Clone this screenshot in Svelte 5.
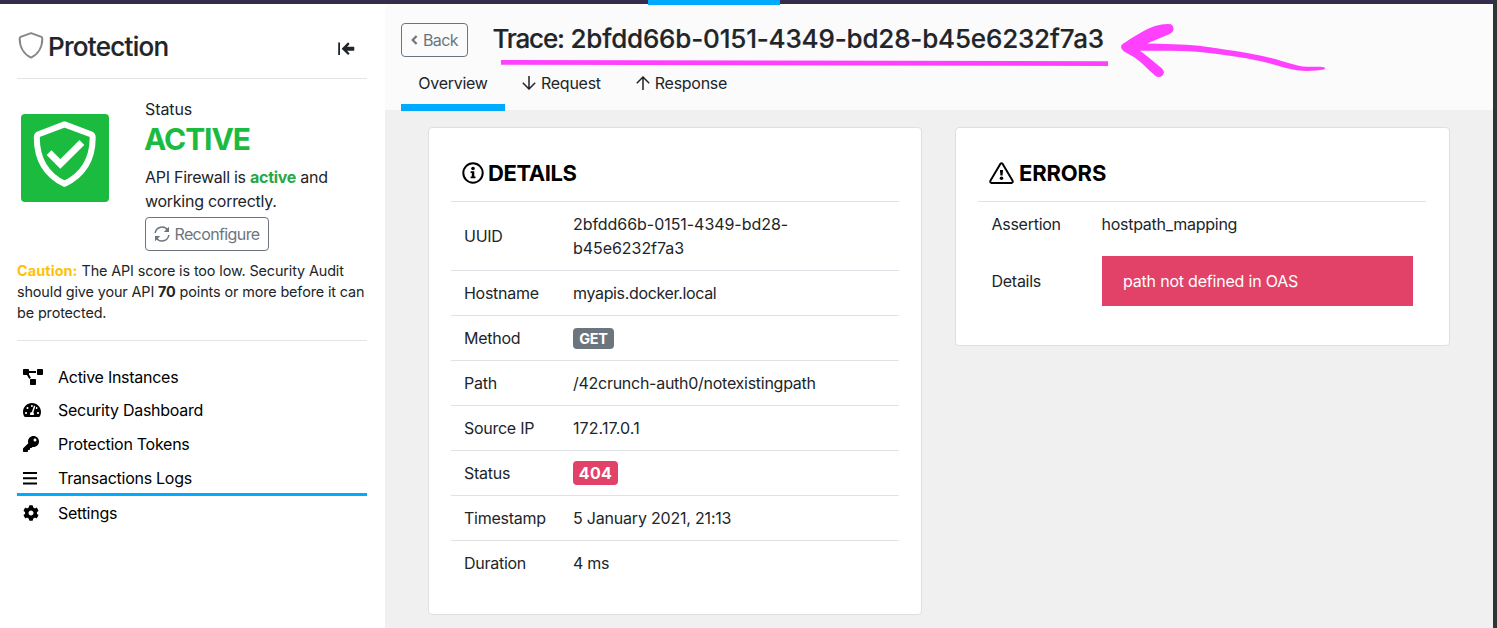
<script>
  const shield = 'M12 1.1 L22 4.7 Q22.9 5.1 22.9 6.2 C22.9 14.5 18.8 21.5 12 24.6 C5.2 21.5 1.1 14.5 1.1 6.2 Q1.1 5.1 2 4.7 Z';
  const menu = [
    { label: 'Active Instances', w: 20, box: '0 0 640 512', d: 'M384 320H256c-17.67 0-32 14.33-32 32v128c0 17.67 14.33 32 32 32h128c17.67 0 32-14.33 32-32V352c0-17.67-14.33-32-32-32zM192 32c0-17.67-14.33-32-32-32H32C14.33 0 0 14.33 0 32v128c0 17.67 14.33 32 32 32h95.72l73.16 128.04C211.98 300.98 232.4 288 256 288h.28L192 175.51V128h224V64H192V32zM608 0H480c-17.67 0-32 14.33-32 32v128c0 17.67 14.33 32 32 32h128c17.67 0 32-14.33 32-32V32c0-17.67-14.33-32-32-32z' },
    { label: 'Security Dashboard', w: 18, box: '0 0 576 512', d: 'M288 32C128.94 32 0 160.94 0 320c0 52.8 14.25 102.26 39.06 144.8 5.61 9.62 16.3 15.2 27.44 15.2h443c11.14 0 21.83-5.58 27.44-15.2C561.75 422.26 576 372.8 576 320c0-159.06-128.94-288-288-288zm0 64c14.71 0 26.58 10.13 30.32 23.65-1.11 2.26-2.64 4.23-3.45 6.67l-9.22 27.67c-5.13 3.49-10.97 6.01-17.64 6.01-17.67 0-32-14.33-32-32S270.33 96 288 96zM96 384c-17.67 0-32-14.33-32-32s14.33-32 32-32 32 14.33 32 32-14.33 32-32 32zm48-160c-17.67 0-32-14.33-32-32s14.33-32 32-32 32 14.33 32 32-14.33 32-32 32zm246.77-72.41l-61.33 184C343.13 347.33 352 364.54 352 384c0 11.72-3.38 22.55-8.88 32H232.88c-5.5-9.45-8.88-20.28-8.88-32 0-33.94 26.5-61.43 59.9-63.59l61.34-184.01c4.17-12.56 17.73-19.45 30.36-15.17 12.57 4.19 19.35 17.79 15.17 30.36zm14.66 57.2l15.52-46.55c3.47-1.29 7.13-2.23 11.05-2.23 17.67 0 32 14.33 32 32s-14.33 32-32 32c-11.38-.01-20.89-6.28-26.57-15.22zM480 384c-17.67 0-32-14.33-32-32s14.33-32 32-32 32 14.33 32 32-14.33 32-32 32z' },
    { label: 'Protection Tokens', w: 16, box: '0 0 512 512', d: 'M512 176.001C512 273.203 433.202 352 336 352c-11.22 0-22.19-1.062-32.827-3.069l-24.012 27.014A23.999 23.999 0 0 1 261.223 384H224v40c0 13.255-10.745 24-24 24h-40v40c0 13.255-10.745 24-24 24H24c-13.255 0-24-10.745-24-24v-78.059c0-6.365 2.529-12.47 7.029-16.971l161.802-161.802C163.108 213.814 160 195.271 160 176 160 78.798 238.797.001 335.999 0 433.488-.001 512 78.511 512 176.001zM336 128c0 26.51 21.49 48 48 48s48-21.49 48-48-21.49-48-48-48-48 21.49-48 48z' },
    { label: 'Transactions Logs', w: 14, box: '0 0 14 16', active: true, d: 'M0 2h14v2H0zM0 7.2h14v2H0zM0 12.4h14v2H0z' },
    { label: 'Settings', w: 16, box: '0 0 512 512', d: 'M487.4 315.7l-42.6-24.6c4.3-23.2 4.3-47 0-70.2l42.6-24.6c4.9-2.8 7.1-8.6 5.5-14-11.1-35.6-30-67.8-54.7-94.6-3.8-4.1-10-5.1-14.8-2.3L380.8 110c-17.9-15.4-38.5-27.3-60.8-35.1V25.8c0-5.6-3.9-10.5-9.4-11.7-36.7-8.2-74.3-7.8-109.2 0-5.5 1.2-9.4 6.1-9.4 11.7V75c-22.2 7.9-42.8 19.8-60.8 35.1L88.7 85.5c-4.9-2.8-11-1.9-14.8 2.3-24.7 26.7-43.6 58.9-54.7 94.6-1.7 5.4.6 11.2 5.5 14L67.3 221c-4.3 23.2-4.3 47 0 70.2l-42.6 24.6c-4.9 2.8-7.1 8.6-5.5 14 11.1 35.6 30 67.8 54.7 94.6 3.8 4.1 10 5.1 14.8 2.3l42.6-24.6c17.9 15.4 38.5 27.3 60.8 35.1v49.2c0 5.6 3.9 10.5 9.4 11.7 36.7 8.2 74.3 7.8 109.2 0 5.5-1.2 9.4-6.1 9.4-11.7v-49.2c22.2-7.9 42.8-19.8 60.8-35.1l42.6 24.6c4.9 2.8 11 1.9 14.8-2.3 24.7-26.7 43.6-58.9 54.7-94.6 1.5-5.5-.7-11.3-5.6-14.1zM256 336c-44.1 0-80-35.9-80-80s35.9-80 80-80 80 35.9 80 80-35.9 80-80 80z' }
  ];
  const details = [
    { k: 'UUID', v: '2bfdd66b-0151-4349-bd28-b45e6232f7a3', cls: 'uuid' },
    { k: 'Hostname', v: 'myapis.docker.local', cls: 'host' },
    { k: 'Method', v: 'GET', badge: 'get' },
    { k: 'Path', v: '/42crunch-auth0/notexistingpath' },
    { k: 'Source IP', v: '172.17.0.1', cls: 'ip' },
    { k: 'Status', v: '404', badge: 'code' },
    { k: 'Timestamp', v: '5 January 2021, 21:13', cls: 'time' },
    { k: 'Duration', v: '4 ms' }
  ];
</script>

<div class="frame">
  <div class="screen">
    <div class="topbar"><span class="marker"></span></div>
    <div class="body">
      <aside>
        <header class="brand">
          <svg class="brand-icon" width="26" height="27" viewBox="-0.5 0 25 26"><path d={shield} fill="none" stroke="#868686" stroke-width="1.9" stroke-linejoin="round" /></svg>
          <h2>Protection</h2>
          <svg class="collapse" width="17" height="14" viewBox="0 0 17 14"><path d="M1.1.5v12.6" stroke="#212529" stroke-width="1.8" /><path d="M4.1 6.3 9.6.8q.6-.5 1.1 0l.5.6q.5.6 0 1.1L9.1 4.700h6.500q.7 0 .7.7v2.700q0 .7-.7.7H9.100l2.100 2.100q.5.600 0 1.100l-.5.600q-.5.500-1.100 0L4.100 7.300q-.6-.5 0-1z" fill="#212529" /></svg>
        </header>
        <section class="state">
          <div class="tile">
            <svg width="88" height="88" viewBox="0 0 88 88" fill="none" stroke="#fff"><path d="M43.5 10.4 69.8 20.2Q71.7 21 71.7 23.4C71.7 45 61.5 61 43.5 69.8 25.5 61 15.8 45 15.8 23.4Q15.8 21 17.6 20.2Z" stroke-width="6" stroke-linejoin="round" /><path d="M28 38.7 39.3 50 60.9 28.5" stroke-width="6.8" /></svg>
          </div>
          <div class="state-text">
            <div class="lbl">Status</div>
            <div class="big">ACTIVE</div>
            <p>API Firewall is <b>active</b> and<br />working correctly.</p>
            <button class="btn reconf">
              <svg width="16" height="16" viewBox="0 0 16 16" fill="none" stroke="currentColor" stroke-width="1.5"><path d="M1.2 7A6.8 6.8 0 0 1 13.8 4.4M14.8 9A6.8 6.8 0 0 1 2.2 11.6" /><path d="M15 .8V6H9.8ZM1 15.2V10H6.2Z" fill="currentColor" stroke="none" /></svg>
              <span>Reconfigure</span>
            </button>
          </div>
        </section>
        <p class="caution"><b class="warn">Caution:</b> The API score is too low. Security Audit<br />should give your API <b>70</b> points or more before it can<br />be protected.</p>
        <nav>
          {#each menu as m}
            <a class:active={m.active}>
              <span class="ico"><svg width={m.w} height="16" viewBox={m.box}><path d={m.d} /></svg></span>
              <span>{m.label}</span>
            </a>
          {/each}
        </nav>
      </aside>

      <main>
        <div class="head">
          <div class="title">
            <button class="btn back"><svg width="7" height="10" viewBox="0 0 7 10"><path d="M5.6 1 1.7 5l3.900 4" fill="none" stroke="currentColor" stroke-width="2.200" /></svg><span>Back</span></button>
            <h1><span class="word">Trace:</span> 2bfdd66b-0151-4349-bd28-b45e6232f7a3</h1>
          </div>
          <div class="tabs">
            <span class="tab on">Overview</span>
            <span class="tab req"><svg width="14" height="14" viewBox="0 0 14 14"><path d="M7 0v13M.8 6.800 7 13l6.200-6.200" fill="none" stroke="currentColor" stroke-width="1.500" /></svg>Request</span>
            <span class="tab res"><svg width="14" height="14" viewBox="0 0 14 14"><path d="M7 14V1M.8 7.200 7 1l6.200 6.200" fill="none" stroke="currentColor" stroke-width="1.500" /></svg>Response</span>
          </div>
        </div>
        <div class="cards">
          <section class="card details">
            <h3><svg width="22" height="22" viewBox="0 0 22 22"><circle cx="11" cy="11" r="9.700" fill="none" stroke="#000" stroke-width="2" /><circle cx="11" cy="6.500" r="1.800" /><path d="M8.600 9.200h3.700v5.200h1.200v1.800H8.600v-1.800h1.200V11H8.600z" /></svg>DETAILS</h3>
            {#each details as r}
              <div class="row">
                <span>{r.k}</span>
                <span class={r.cls}>{#if r.badge}<b class="badge {r.badge}">{r.v}</b>{:else}{r.v}{/if}</span>
              </div>
            {/each}
          </section>
          <section class="card errors">
            <h3><svg width="25" height="22" viewBox="0 0 24 22" preserveAspectRatio="none"><path d="M11 1.800Q12 .4 13 1.800L22.700 18.900Q23.200 20.800 21.500 21H2.500Q.8 20.800 1.300 18.900Z" fill="none" stroke="#000" stroke-width="1.900" /><path d="M10.500 8h3l-.5 5.600h-2z" /><circle cx="12" cy="16.300" r="1.700" /></svg>ERRORS</h3>
            <div class="row"><span>Assertion</span><span>hostpath_mapping</span></div>
            <div class="row msg"><span>Details</span><span class="alert">path not defined in OAS</span></div>
          </section>
        </div>
      </main>
    </div>
  </div>
  <svg class="ink" width="1497" height="120" viewBox="0 0 1497 120">
    <path d="M501 62.300 1108 63.600" stroke="#ff40ff" stroke-width="4.800" />
    <path fill="#ff40ff" d="M1122.500 44C1132 38 1145 29 1155 26Q1164 23.400 1171 24.200Q1174.500 26.500 1173.200 30.500Q1172 33.500 1166 35.500L1147 43.400C1164 44 1182 43.700 1199 45.700C1222 49 1249 52.500 1271 58C1285 61.500 1295 65.500 1303 66.600C1311 67.200 1318 66.200 1324 67.300Q1326 68.500 1324 69.600C1316 71 1305 71.500 1297 70.300C1286 68.500 1276 64.500 1262 61.500C1241 56.600 1219 54 1197 51.700C1181 50.300 1160 50.800 1140 50.700C1148 56.500 1156 63.500 1162 68.500Q1165.500 72.500 1162.500 75.500Q1159 78.500 1155 75.500C1147 68.500 1140 60.500 1132 56L1124 51.500Q1119 47.500 1122.500 44Z" />
  </svg>
</div>

<style>
  :global(body) { margin: 0; overflow: hidden; }
  .frame { position: relative; display: flex; height: 628px; width: 1497px; background: #303435; font: 16px/24px Inter, "Liberation Sans", sans-serif; letter-spacing: -0.27px; color: #212529; overflow: hidden; }
  .screen { width: 1493px; display: flex; flex-direction: column; background: #fff; }
  .topbar { height: 4px; background: #352b4b; flex: none; display: flex; }
  .marker { width: 132px; height: 5px; margin-left: 648px; background: #00aaff; z-index: 1; }
  .body { flex: 1; display: flex; min-height: 0; }
  aside { width: 350px; padding: 0 18px 0 17px; flex: none; }
  .brand { height: 74px; border-bottom: 1px solid #e3e4e5; display: flex; align-items: center; padding-right: 12px; width: 338px; }
  .brand-icon { margin: 9px 0 0 0.5px; }
  h2 { margin: 11px 0 0 4.5px; font-size: 26px; line-height: 32px; font-weight: 500; letter-spacing: -0.7px; -webkit-text-stroke: 0.2px; }
  .collapse { margin: 15px 0 0 auto; }
  .state { display: flex; padding: 18px 0 0 4px; }
  .tile { width: 88px; height: 88px; border-radius: 4px; background: #1bbb40; margin: 17px 36px 0 0; }
  .tile svg { display: block; }
  .lbl { letter-spacing: -0.1px; }
  .big { font-size: 30px; line-height: 36px; font-weight: 700; color: #1bbb40; letter-spacing: -1.1px; margin-left: -1px; }
  .state p { margin: 8px 0 4px; letter-spacing: -0.27px; }
  .state p b { color: #28a745; }
  .btn { font: inherit; letter-spacing: inherit; color: #6c757d; border: 1px solid #6c757d; border-radius: 4px; background: transparent; height: 34px; padding: 0; box-sizing: border-box; display: flex; align-items: center; justify-content: center; }
  .reconf { width: 124px; gap: 4px; letter-spacing: -0.6px; }
  .caution { margin: 9px 0 0; padding-bottom: 17px; font-size: 14.4px; line-height: 21px; border-bottom: 1px solid #e3e4e5; letter-spacing: -0.12px; }
  .warn { color: #ffc107; letter-spacing: 0.1px; }
  nav { padding-top: 19px; color: #000; }
  nav a { display: flex; align-items: center; height: 33.5px; }
  nav a.active { border-bottom: 3px solid #00aaff; height: 30.5px; padding-top: 2px; }
  .ico { width: 35px; padding-left: 6px; display: flex; }
  main { flex: 1; background: #f0f0f0; }
  .head { height: 106px; background: #fbfbfb; padding-left: 16px; display: flex; flex-direction: column; }
  .title { display: flex; height: 62px; }
  .back { width: 67px; gap: 5px; margin-top: 19px; letter-spacing: -0.6px; }
  h1 { margin: 18px 0 0 24.5px; font-size: 26px; line-height: 34px; font-weight: 500; letter-spacing: -0.18px; white-space: nowrap; -webkit-text-stroke: 0.2px; }
  .word { letter-spacing: -1.2px; }
  .tabs { display: flex; height: 45px; z-index: 1; }
  .tab { display: flex; align-items: center; height: 35px; padding-bottom: 4px; gap: 5px; }
  .tab.on { width: 104px; justify-content: center; padding-bottom: 4px; height: 35px; border-bottom: 6px solid #00aaff; border-top: 0; margin-right: 17px; box-shadow: 0 1px #00aaff, inset 0 0 #fbfbfb; background: none; }
  .tab.req { margin-right: 35px; }
  .cards { display: flex; gap: 33px; padding: 17px 0 0 43px; align-items: flex-start; }
  .card { background: #fff; border: 1px solid #dfdfdf; border-radius: 4px; box-sizing: border-box; width: 494px; padding: 0 22px; }
  .details { height: 488px; }
  .errors { height: 219px; width: 495px; padding-right: 23px; }
  h3 { margin: 0; height: 73px; padding: 17px 0 0 11px; box-sizing: border-box; display: flex; align-items: center; gap: 4px; font-size: 22px; font-weight: 700; color: #000; letter-spacing: -0.4px; }
  .errors h3 { gap: 5px; letter-spacing: -0.15px; }
  .row { border-top: 1px solid #dee2e6; padding: 10px 13px; display: grid; grid-template-columns: 109px 1fr; align-items: center; }
  .uuid { width: 230px; letter-spacing: -0.05px; }
  .host { letter-spacing: -0.35px; }
  .ip { letter-spacing: 0.1px; }
  .time { letter-spacing: -0.2px; }
  .errors .row { grid-template-columns: 110px 1fr; padding-left: 13.5px; }
  .errors .msg { border: 0; padding-top: 10px; }
  .badge { display: block; color: #fff; border-radius: 4px; text-align: center; }
  .get { width: 41px; height: 21px; font-size: 14.5px; line-height: 21px; background: #6c757d; }
  .code { width: 45px; height: 24px; background: #e24268; letter-spacing: 0.4px; }
  .row:has(.badge) { height: 24px; }
  .alert { background: #e24268; color: #fff; padding: 13px 21.5px; letter-spacing: -0.2px; }
  .ink { position: absolute; left: 0; top: 0; pointer-events: none; }
</style>
